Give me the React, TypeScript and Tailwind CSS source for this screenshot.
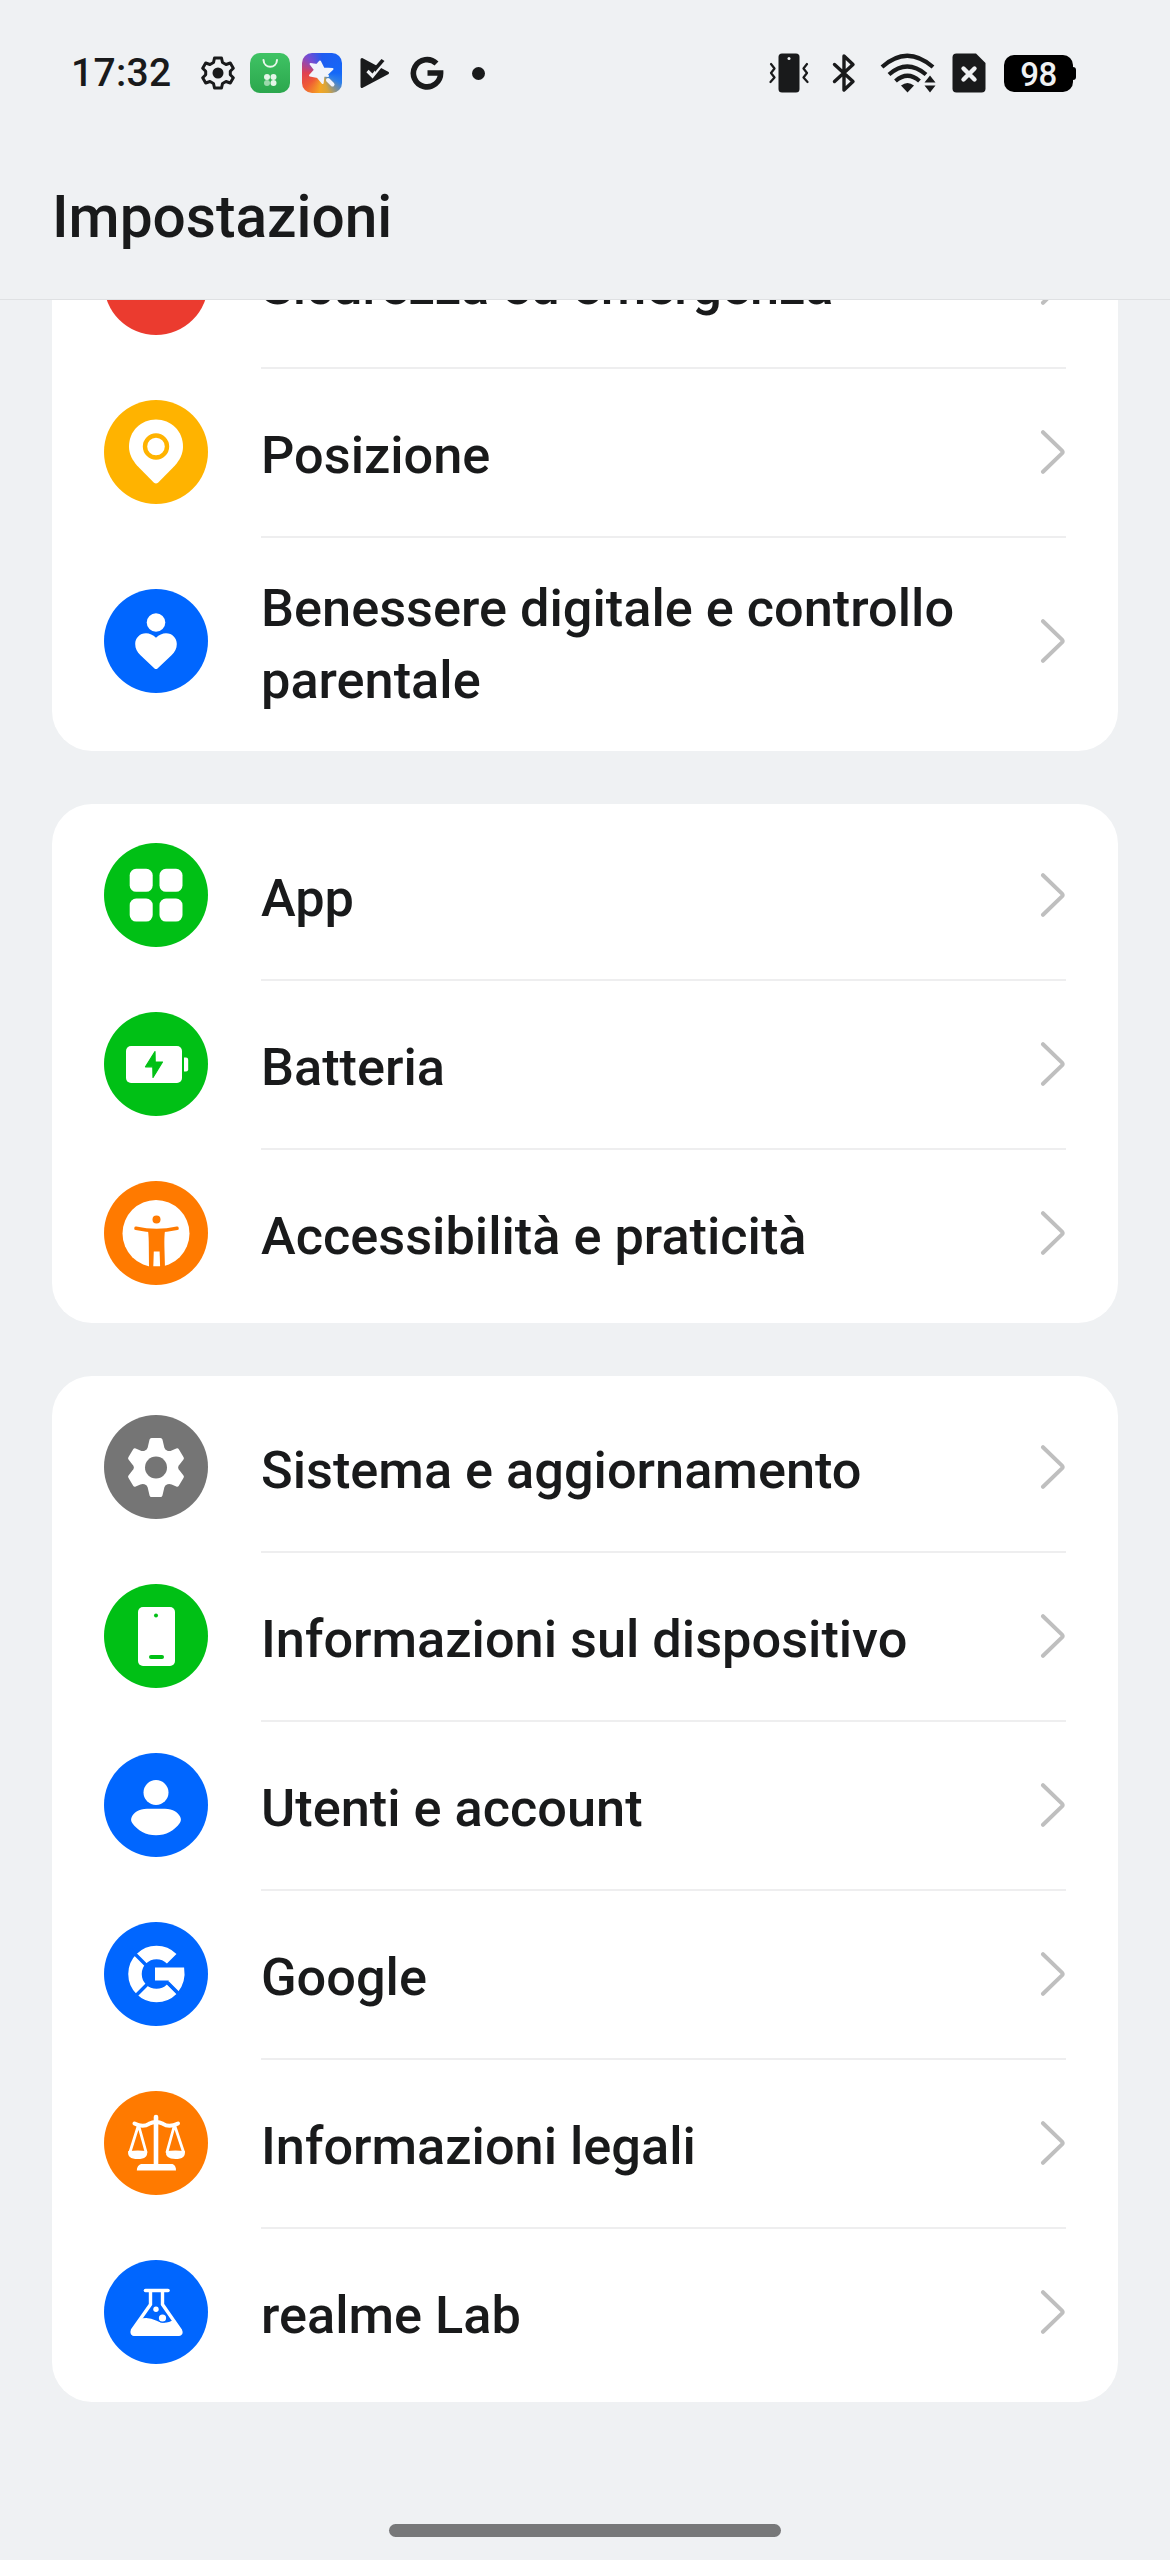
import React from 'react';

const INK = '#191a1b';

const Chevron: React.FC = () => (
    <svg className="w-[26px] h-[46px] shrink-0" viewBox="0 0 26 46" fill="none">
        <path d="M3 3.2L22 21.6Q23.3 23 22 24.4L3 42.8" stroke="#bfbfbf" strokeWidth={4} strokeLinecap="round" strokeLinejoin="round" />
    </svg>
);

interface GlyphProps {
    children?: React.ReactNode;
}

// All glyphs share a 104 unit square, the size of the round badge they sit in.
const Glyph: React.FC<GlyphProps> = ({ children }) => (
    <svg className="w-[104px] h-[104px]" viewBox="0 0 104 104" fill="white">
        {children}
    </svg>
);

const LocationGlyph: React.FC = () => (
    <Glyph>
        <path d="M52 19.5c-15 0-27 11.5-27 27 0 8 3.5 13.500 8 19L50 82.7q2 1.6 4 0L71 65.5c4.5-5.5 8-11 8-19 0-15.5-12-27-27-27z" />
        <circle cx="52" cy="46.5" r="11" fill="none" stroke="#ffb300" strokeWidth={4.4} />
    </Glyph>
);

const WellbeingGlyph: React.FC = () => (
    <Glyph>
        <circle cx="52" cy="33.5" r="9.3" />
        <path d="M52 48.800c3-3 6.5-4.6 10-4.6 6.3 0 10.8 4.8 10.8 10.8 0 4.5-1.8 8-5.3 11.3L53.5 79.5q-1.5 1.2-3 0L36.5 66.3C33 63 31.2 59.5 31.2 55c0-6 4.5-10.8 10.8-10.8 3.5 0 7 1.6 10 4.6z" />
    </Glyph>
);

const AppsGlyph: React.FC = () => (
    <Glyph>
        <rect x="25.7" y="25.8" width="23" height="23" rx="6.5" />
        <rect x="55.5" y="25.8" width="23" height="23" rx="6.5" />
        <rect x="25.7" y="55.6" width="23" height="23" rx="6.5" />
        <rect x="55.5" y="55.6" width="23" height="23" rx="6.5" />
    </Glyph>
);

const BatteryGlyph: React.FC = () => (
    <Glyph>
        <rect x="22" y="34" width="56" height="37" rx="5" />
        <path d="M80 45.5h2q2.2 0 2.2 2.2v9.600q0 2.200-2.200 2.200H80z" />
        <path d="M51 39.500L41.500 54.800h7.300L49 65.500l9.500-15.500h-7.300z" fill="#00c015" stroke="#00c015" strokeWidth={1.2} strokeLinejoin="round" />
    </Glyph>
);

const AccessibilityGlyph: React.FC = () => (
    <Glyph>
        <circle cx="52" cy="52.5" r="33.5" />
        <g fill="#ff7a00">
            <circle cx="52.5" cy="38.5" r="4" />
            <path d="M32 47.3Q52.5 52 73 47.3" fill="none" stroke="#ff7a00" strokeWidth={3.6} strokeLinecap="round" />
            <path d="M44 49.500h17q-.8 6-.6 16L61 87.500H45l-.2-22q0-10-.8-16z" />
        </g>
        <path d="M49.800 70.500h5.800l.5 14.700h-6.800z" />
    </Glyph>
);

// Six rounded teeth around a ring.
const SettingsGlyph: React.FC = () => (
    <Glyph>
        <path
            stroke="white"
            strokeWidth={4}
            strokeLinejoin="round"
            d="M47.500 25h9l2 8.500q1.200 3.200 4.500 4.200 3 .8 5.500-.4l4.600-2.100 4.800 8-3.300 4.300q-2.500 2.500-2.500 5t2.500 5l3.300 4.300-4.800 8-4.600-2.100q-2.500-1.200-5.500-.4-3.300 1-4.500 4.200l-2 8.500h-9l-2-8.500q-1.200-3.200-4.500-4.200-3-.8-5.500.4l-4.600 2.100-4.800-8 3.300-4.300q2.500-2.500 2.500-5t-2.500-5l-3.300-4.300 4.800-8 4.600 2.100q2.500 1.200 5.500.4 3.300-1 4.500-4.200z"
        />
        <circle cx="52" cy="52.5" r="11" fill="#757575" />
    </Glyph>
);

const PhoneGlyph: React.FC = () => (
    <Glyph>
        <rect x="34" y="23" width="37" height="59" rx="5" />
        <circle cx="52" cy="31.5" r="2" fill="#00c015" />
        <rect x="45" y="71" width="15" height="4" rx="2" fill="#00c015" />
    </Glyph>
);

const UserGlyph: React.FC = () => (
    <Glyph>
        <circle cx="52" cy="39.5" r="12.5" />
        <path d="M43 55.8h18c8 0 13.500 4 15.300 8.200 1 2.300.8 4-.5 6C70.500 77.500 62 82.300 52 82.300S33.500 77.500 28.200 70c-1.300-2-1.500-3.700-.5-6 1.800-4.200 7.300-8.200 15.300-8.200z" />
    </Glyph>
);

const GoogleGlyph: React.FC = () => (
    <Glyph>
        <path d="M67.700 36.800A21.500 21.500 0 1067.700 67.200" fill="none" stroke="white" strokeWidth={13.5} />
        <path d="M51 45.500h29.100q2.300 14.500-6.600 25.300L64 61.300l.8-2.800H51z" />
        <path d="M26 27L43 44M63.500 60.500L76 73" stroke="#0066ff" strokeWidth={3.4} />
        <path d="M31 74.500L45 60.500" stroke="#0066ff" strokeWidth={3.4} />
    </Glyph>
);

const LegalGlyph: React.FC = () => (
    <Glyph>
        <g fill="none" stroke="white" strokeLinecap="round" strokeLinejoin="round">
            <path d="M52 26V74" strokeWidth={4.6} />
            <path d="M30.500 32.5Q39 37 45 32.8 52 29 59 32.8 65 37 74 32.5" strokeWidth={4} />
            <path d="M34.500 34L26 61M34.500 34L42 61M70.500 34L63 61M70.500 34L79.500 61" strokeWidth={2.8} />
        </g>
        <path d="M24.200 60q9.800-1 18.800 0 1.500 8-9.300 8t-9.500-8zM62 60q9.500-1 18.800 0 1.300 8-9.300 8T62 60z" />
        <path d="M37 73h31.500q3.700 1.500 3.500 6.500H32.800q0-5 4.200-6.500z" />
    </Glyph>
);

const LabGlyph: React.FC = () => (
    <Glyph>
        <path d="M41.500 30.5h22.500" stroke="white" strokeWidth={3.6} strokeLinecap="round" />
        <path d="M46.500 31v13.500L28.500 70q-1.500 4.300 2.300 4.300h43.500q4 0 2-4.300L58.500 44.500V31" fill="none" stroke="white" strokeWidth={3.4} />
        <path d="M38.500 58.300q7-1.300 13.500 2.200t13 1.500l3.500-1.500L77 70.500q1.500 5.500-4 5.500H32q-6.500 0-4.500-5.500z" />
        <circle cx="52" cy="49.200" r="2.700" />
        <circle cx="58.5" cy="58" r="4.800" fill="#0066ff" />
        <circle cx="58.5" cy="58" r="3.600" />
    </Glyph>
);

interface Item {
    label: string;
    color: string;
    glyph?: React.ReactNode;
}

const groups: Item[][] = [
    [
        { label: 'Sicurezza ed emergenza', color: 'bg-[#eb3b2f]' },
        { label: 'Posizione', color: 'bg-[#ffb300]', glyph: <LocationGlyph /> },
        { label: 'Benessere digitale e controllo parentale', color: 'bg-[#0066ff]', glyph: <WellbeingGlyph /> },
    ],
    [
        { label: 'App', color: 'bg-[#00c015]', glyph: <AppsGlyph /> },
        { label: 'Batteria', color: 'bg-[#00c015]', glyph: <BatteryGlyph /> },
        { label: 'Accessibilità e praticità', color: 'bg-[#ff7a00]', glyph: <AccessibilityGlyph /> },
    ],
    [
        { label: 'Sistema e aggiornamento', color: 'bg-[#757575]', glyph: <SettingsGlyph /> },
        { label: 'Informazioni sul dispositivo', color: 'bg-[#00c015]', glyph: <PhoneGlyph /> },
        { label: 'Utenti e account', color: 'bg-[#0066ff]', glyph: <UserGlyph /> },
        { label: 'Google', color: 'bg-[#0066ff]', glyph: <GoogleGlyph /> },
        { label: 'Informazioni legali', color: 'bg-[#ff7a00]', glyph: <LegalGlyph /> },
        { label: 'realme Lab', color: 'bg-[#0066ff]', glyph: <LabGlyph /> },
    ],
];

const Row: React.FC<{ item: Item; first: boolean }> = ({ item, first }) => (
    <div className="flex items-center pl-[52px]">
        <div className={`w-[104px] h-[104px] rounded-full shrink-0 overflow-hidden ${item.color}`}>{item.glyph}</div>
        <div className={`ml-[53px] mr-[52px] flex flex-1 items-center justify-between min-h-[169px] pt-7 pb-[29px] border-t-2 ${first ? 'border-transparent' : 'border-[#eeeeef]'}`}>
            <span className="w-[720px] pt-[6px] text-[52.3px] leading-[72px]">{item.label}</span>
            <Chevron />
        </div>
    </div>
);

const StatusBar: React.FC = () => (
    <div className="flex h-[146px] items-center justify-between pl-[71px] pr-[94px]">
        <div className="flex items-center">
            <span className="w-[102px] text-[39px] leading-[40px] tracking-[0.3px]">17:32</span>
            <svg className="ml-[28px] w-[34px] h-[34px]" viewBox="0 0 34 34" fill="none">
                <path
                    d="M13.500 2h7l1 4.500 3.500 2 4.300-1.500 3 5.200-3 3v3.600l3 3-3 5.200L25 25.500l-3.500 2-1 4.500h-7l-1-4.500-3.500-2-4.300 1.500-3-5.200 3-3v-3.600l-3-3 3-5.200L9 8.500l3.500-2z"
                    stroke={INK}
                    strokeWidth={3}
                    strokeLinejoin="round"
                />
                <circle cx="17" cy="17" r="5.5" fill={INK} />
            </svg>
            <svg className="ml-[15px] w-[40px] h-[40px]" viewBox="0 0 40 40" fill="none">
                <defs>
                    <linearGradient id="market" x1="0" y1="0" x2="0" y2="1">
                        <stop offset="0" stopColor="#3fc364" />
                        <stop offset="1" stopColor="#2ba74d" />
                    </linearGradient>
                </defs>
                <rect width="40" height="40" rx="10" fill="url(#market)" />
                <path d="M13.500 7c.5 9 13 9 13.500 0" stroke="#e9f7ec" strokeWidth={2} strokeLinecap="round" />
                <g fill="#e4f5e8">
                    <circle cx="17" cy="24" r="3" />
                    <circle cx="23.5" cy="24" r="3" />
                    <circle cx="17" cy="30" r="3" opacity={0.6} />
                    <circle cx="23.5" cy="30" r="3" />
                </g>
            </svg>
            <div className="ml-[12px] w-[40px] h-[40px] rounded-[10px] bg-[conic-gradient(from_0deg_at_50%_50%,#1f5cf0,#1468f8_25%,#2f80e8_33%,#d9a53a_45%,#f5a623_52%,#ef5a35_64%,#e0404f_75%,#7a4bd0_88%,#1f5cf0)]">
                <svg className="w-[40px] h-[40px]" viewBox="0 0 40 40" fill="#f1f3fb" stroke="#f1f3fb" strokeLinejoin="round">
                    <path d="M18 8.500l3.500 7 9 .500-5.800 5.500 1.300 1.500-4.500-.5-.8 7.500-5-6-7.700-1.500 5-5.500-4.500-6 6.500 1z" strokeWidth={2} />
                    <path d="M26 27l4.500 4.500" strokeWidth={4} strokeLinecap="round" />
                </svg>
            </div>
            <svg className="ml-[18px] w-[30px] h-[32px]" viewBox="0 0 30 32">
                <path d="M2 2.500L27.500 16 2 29.500z" fill={INK} stroke={INK} strokeWidth={3} strokeLinejoin="round" />
                <path d="M7.500 14l5 5L24 5" fill="none" stroke="#eff1f3" strokeWidth={3.2} />
                <path d="M15 9.500L21.500 2l3 2-9.500 11z" fill={INK} />
            </svg>
            <svg className="ml-[20px] w-[34px] h-[34px]" viewBox="0 0 34 34" fill="none">
                <path d="M26.500 7.500A13.600 13.600 0 1030.600 17H17.500" stroke={INK} strokeWidth={5.6} />
            </svg>
            <div className="ml-[28px] w-[13px] h-[13px] rounded-full bg-[#191a1b]"></div>
        </div>
        <div className="flex items-center">
            <svg className="w-[40px] h-[40px]" viewBox="0 0 40 40" fill="none" stroke={INK} strokeWidth={2.2} strokeLinecap="round" strokeLinejoin="round">
                <rect x="9.5" y="0.5" width="21" height="39" rx="3.5" fill={INK} stroke="none" />
                <circle cx="20" cy="5.5" r="1.5" fill="#eff1f3" stroke="none" />
                <path d="M2 11l3.500 4.500L2 20l3.500 4.500L1.500 29M38 11l-3.500 4.500L38 20l-3.500 4.500L38.500 29" />
            </svg>
            <svg className="ml-[23px] w-[24px] h-[40px]" viewBox="0 0 24 40" fill="none" stroke={INK} strokeWidth={3.4} strokeLinecap="round" strokeLinejoin="round">
                <path d="M2.500 11.500L21 28.500 12 37V3l9 8.500L2.500 28.500" />
            </svg>
            <svg className="ml-[24px] w-[56px] h-[40px]" viewBox="0 0 56 40" fill="none" stroke={INK} strokeWidth={4.2}>
                <path d="M2 14q25-22.500 51 0M9 21.500q18-16 37 0M15.500 28q12-10.500 24 0" />
                <path d="M27.500 39.500l-6.500-7q6.500-5 13 0z" fill={INK} stroke="none" />
                <path d="M50 22.500l5.500 7h-11zM50 39.500l5.500-7h-11z" fill={INK} stroke="none" />
            </svg>
            <svg className="ml-[16px] w-[34px] h-[40px]" viewBox="0 0 34 40">
                <path d="M4.500.5H24L33.500 10v25.500q0 4-4 4h-25q-4 0-4-4v-31q0-4 4-4z" fill={INK} />
                <path d="M11.500 15.500l11 11M22.500 15.500l-11 11" stroke="#eff1f3" strokeWidth={4.4} strokeLinecap="round" />
            </svg>
            <div className="ml-[18px] flex h-[37px] w-[69px] items-center justify-center rounded-[10px] bg-black">
                <span className="pt-[2px] text-[33px] leading-[37px] tracking-[-0.5px] text-[#eff1f3]">98</span>
            </div>
            <div className="w-[3px] h-[13px] rounded-r-[3px] bg-black"></div>
        </div>
    </div>
);

export default function App() {
    return (
        <div className="flex h-[2560px] w-[1170px] flex-col overflow-hidden bg-[#eff1f3] font-['Roboto',sans-serif] font-medium text-[#191a1b]">
            <header className="h-[300px] shrink-0 border-b border-[#dfe1e3]">
                <StatusBar />
                <h1 className="pl-[52px] pt-[36px] text-[58.6px] leading-[70px]">Impostazioni</h1>
            </header>
            <main className="flex-1 overflow-hidden px-[52px]">
                <div className="-mt-[108px] flex flex-col gap-[53px]">
                    {groups.map((group, index) => (
                        <section key={index} className="rounded-[40px] bg-white py-[6px]">
                            {group.map((item, i) => (
                                <Row key={item.label} item={item} first={i === 0} />
                            ))}
                        </section>
                    ))}
                </div>
            </main>
            <div className="mx-auto mb-[23px] h-[13px] w-[392px] shrink-0 rounded-full bg-[#777879]"></div>
        </div>
    );
}
